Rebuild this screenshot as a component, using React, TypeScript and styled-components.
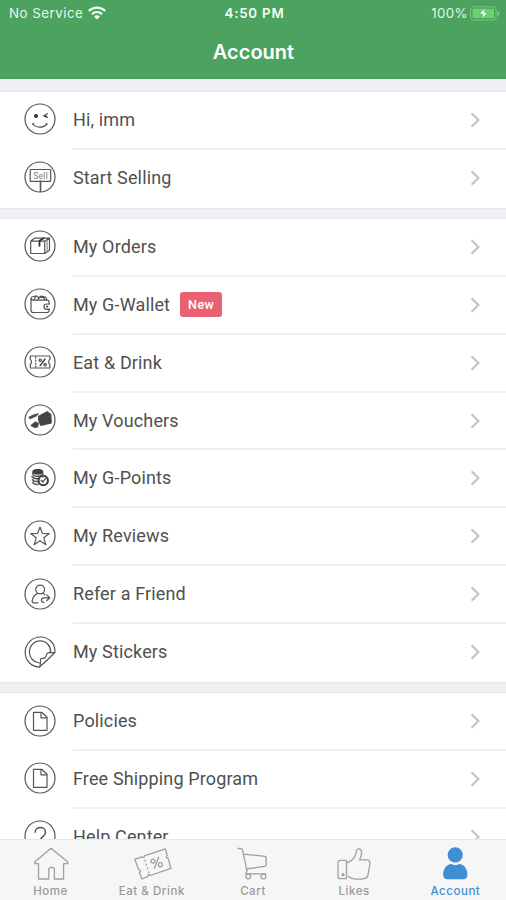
import React from 'react';
import styled, { createGlobalStyle } from 'styled-components';

const GlobalStyle = createGlobalStyle`
  * { box-sizing: border-box; }
  body { margin: 0; background: #fff; }
`;

const Screen = styled.div`
  width: 506px;
  height: 900px;
  display: flex;
  flex-direction: column;
  overflow: hidden;
  background: #efeff4;
  font-family: Roboto, sans-serif;
`;

const Header = styled.header`
  flex: none;
  height: 79px;
  background: #4ba35f;
  border-bottom: 1px solid #459757;
  color: #fff;
  font-family: Inter, sans-serif;
`;

const StatusBar = styled.div`
  display: grid;
  grid-template-columns: 1fr auto 1fr;
  align-items: center;
  height: 26px;
  padding: 0 6px 0 9px;
  font-size: 13.3px;
  line-height: 16px;
`;

const Carrier = styled.div`
  display: flex;
  align-items: center;
  gap: 5px;
  color: #e9f6e9;
  letter-spacing: 0.5px;
`;

const Clock = styled.div`
  font-weight: 600;
  letter-spacing: 0.8px;
  color: #f4fff4;
`;

const Battery = styled.div`
  display: flex;
  align-items: center;
  justify-content: flex-end;
  gap: 2px;
  color: #e2f5e2;
  letter-spacing: 0.35px;
`;

const Title = styled.h1`
  margin: 11px 0 0;
  padding-left: 1px;
  text-align: center;
  font-size: 20px;
  line-height: 30px;
  font-weight: 600;
  letter-spacing: 0;
`;

const List = styled.main`
  flex: 1;
  min-height: 0;
  overflow: hidden;
  padding-top: 12px;
  display: flex;
  flex-direction: column;
  gap: 9.2px;
`;

const Section = styled.section`
  flex: none;
  background: #fff;
  border-top: 1px solid #e6e6ea;
  border-bottom: 1px solid #e6e6ea;
`;

const Row = styled.div`
  display: flex;
  align-items: center;
  height: 57.88px;
  padding-left: 24px;
`;

const RowBody = styled.div<{ $last: boolean }>`
  flex: 1;
  align-self: stretch;
  display: flex;
  align-items: center;
  margin-left: 17px;
  padding-right: 25px;
  border-bottom: 2px solid ${(p) => (p.$last ? 'transparent' : '#efeff1')};
`;

const Label = styled.span`
  color: #505050;
  font-size: 18px;
  line-height: 24px;
  letter-spacing: 0.14px;
  white-space: nowrap;
`;

const Badge = styled.span`
  margin-left: 10px;
  width: 42px;
  height: 25px;
  border-radius: 3px;
  background: #ea6271;
  color: #fff;
  font-size: 12.5px;
  font-weight: 500;
  letter-spacing: 0.4px;
  line-height: 25px;
  text-align: center;
`;

const Glyph = styled.svg`
  flex: none;
  width: 32px;
  height: 32px;
  margin-bottom: 3px;
  fill: none;
  stroke: #555;
  stroke-width: 1.2;
  stroke-linecap: round;
  stroke-linejoin: round;
`;

const Chevron = styled.svg`
  margin-left: auto;
  width: 11px;
  height: 18px;
  fill: none;
  stroke: #c3c3c6;
  stroke-width: 2.2;
`;

const TabBar = styled.nav`
  flex: none;
  height: 61px;
  display: grid;
  grid-template-columns: repeat(5, 1fr);
  background: #f6f6f6;
  border-top: 1px solid #e9e9ea;
`;

const Tab = styled.div<{ $active: boolean }>`
  display: flex;
  flex-direction: column;
  align-items: center;
  padding-top: 5px;
  color: ${(p) => (p.$active ? '#3f8fd2' : '#999')};
  font-family: Inter, sans-serif;
  font-size: 11.5px;
  font-weight: 500;
  line-height: 14px;
  letter-spacing: 0.55px;
`;

const TabIcon = styled.svg`
  width: 40px;
  height: 36px;
  margin-bottom: 3px;
  fill: none;
  stroke: #a0a0a0;
  stroke-width: 1.3;
  stroke-linejoin: round;
  stroke-linecap: round;
`;

const ring = <circle cx="16" cy="16" r="15" />;

const doc = (
  <>
    {ring}
    <path d="M9.5 7.3h8.2l5.3 5v13H9.5z" />
    <path d="M17 7.5v5.3h5.8" />
  </>
);

const glyphs: Record<string, React.ReactNode> = {
  smile: (
    <>
      {ring}
      <circle cx="12" cy="13" r="1.4" fill="#333" stroke="#333" />
      <path d="M23.5 10.6 19.6 13l3.9 1.6M19.8 13h3" stroke="#444" strokeWidth="1.1" />
      <path d="M9 21c3.3 4.2 10.4 4.2 13.8 0M8.6 21.3l.9-.8M22.3 20.4l.9.9" />
    </>
  ),
  sell: (
    <>
      {ring}
      <rect x="6.2" y="8.5" width="20.5" height="11.8" rx="0.5" />
      <path d="M16.5 20.3v10" strokeWidth="1.6" />
      <text x="16.6" y="18" textAnchor="middle" fontSize="8.5" letterSpacing="0.3" fill="#777" stroke="none">Sell</text>
    </>
  ),
  box: (
    <>
      {ring}
      <path d="M6.7 11.2h14v12.3h-14zM6.7 11.2l4.1-3.1h14.7l-4.8 3.1M20.7 23.5l4.8-3.2V8.1" />
      <path d="m15.6 10.7 4.2-2.6M15.5 10.8v5" stroke="#333" strokeWidth="1.8" />
      <path d="M23.1 10.3v10.8" strokeWidth="0.8" />
    </>
  ),
  wallet: (
    <>
      {ring}
      <path d="M7 11.2v11c0 1.5.8 2.3 2.2 2.3h14c1.2 0 1.9-.7 1.9-1.9v-1.5M7 11.2c.5.7 1.2 1 2.2 1h14c1.2 0 1.9.7 1.9 1.8v1.8" />
      <path d="M25.5 16h-2.8a2.7 2.7 0 0 0 0 5.4h2.8" />
      <path d="M7 11.2c0-1.6.8-2.7 2.2-2.7l3.4-.7 1.8 1.8L17.5 8l4.5 1.3.8 2.8M9.6 11.8l2-3M13.5 11.8l2.3-2.5h3.4l1.6 2.3" strokeWidth="1.2" />
      <circle cx="23.2" cy="18.7" r="0.5" />
    </>
  ),
  ticket: (
    <>
      {ring}
      <path d="M6.3 10h19.6v3.5c-1.6.4-1.6 4.4 0 4.8V22H6.3v-3.7c1.6-.4 1.6-4.4 0-4.8z" />
      <path d="M11.7 11v1.2M11.7 14v1.2M11.7 17v1.2M11.7 20v1.2" />
      <path d="m16 19.8 5-6.8" stroke="#333" strokeWidth="1.3" />
      <circle cx="16.2" cy="14.2" r="1.2" stroke="#444" />
      <circle cx="21.1" cy="18.8" r="1.2" stroke="#444" />
    </>
  ),
  voucher: (
    <>
      {ring}
      <path d="m14.8 12.3 8.3-4.5 3.7 2.6.4 8.5-10.4 2.4-2.2-5.3z" fill="#444" stroke="#444" />
      <path d="m5 13.2 5-2.3 4.3-1-1.8 1.7-6.4 3.1z" fill="#444" />
      <path d="m7.1 21.4 4.3-3.3 3 1.1-.8 3.8-3.3.3z" fill="#444" />
    </>
  ),
  coins: (
    <>
      {ring}
      <ellipse cx="13.8" cy="9.7" rx="4.8" ry="2.2" fill="#444" stroke="#333" />
      <path d="M8.9 10.2v2c1 2.7 8.6 2.7 9.8 0v-2M8 14.5c1.2 2 4.4 2.6 7 2M8.5 17.7c1.1 1.5 3.2 2.1 5.4 1.8M8.5 20.4c1.1 1.6 3.4 2.3 5.6 2" strokeWidth="1.5" />
      <circle cx="19.2" cy="18.5" r="4.7" strokeWidth="2.1" stroke="#3d3d3d" />
      <path d="m17.2 18.3 1.6 1.8 2.6-3.5M19 13.8v1.3" strokeWidth="1.5" />
    </>
  ),
  star: (
    <>
      {ring}
      <path d="m16 7 2.3 6.4 7 .2-5.5 4.2 2 6.9-5.8-4-5.8 4 2-6.9-5.5-4.2 7-.2z" />
    </>
  ),
  refer: (
    <>
      {ring}
      <circle cx="16.2" cy="11.5" r="4.4" />
      <path d="M13.7 15.4c-3.2 1.3-5.3 4-5.6 8.2 0 .9.4 1.2 1.2 1.2h4.6M18.7 15.3l2.1 1.4M20.2 24.5c-3.8-.4-3.5-4.7-.2-4.7h5.3M22.7 16.9l3 2.9-3 2.9" />
    </>
  ),
  sticker: (
    <>
      <path d="M30.8 16.5C31.7 7.8 25.2 1 16.5 1 8.3 1 1.2 7.6 1.2 16c0 8.6 6.2 15 14.3 15 4.5-3.8 11.4-10.4 15.3-14.5z" />
      <path d="M26.6 16.2c.3-6.1-4.1-11.3-10.3-11.3S5.4 9.8 5.4 16c0 5.7 4 10 9.8 11M15.5 31c1.7-3.1.5-6.1 1.2-8.3 1.7-.7 3.2.3 4.6-1.3 1.3-1.4.7-3.8 2.8-4.7 2-.4 4.6.2 6.7-.2" />
    </>
  ),
  doc,
  help: (
    <>
      {ring}
      <path d="M11.2 12.3c0-6.4 10.3-6.3 10.3 0 0 4.5-5.2 4.1-5.2 8.4" strokeWidth="1.5" />
      <circle cx="16.3" cy="24" r="0.5" />
    </>
  ),
};

const tabGlyphs: Record<string, React.ReactNode> = {
  home: <path d="M20 3.3 3.7 17.1v1.6h3.8V34h10.3V24.6c0-3 5.6-3 5.6 0V34h9.2V18.7h4.2v-1.6l-5.1-4.4z" />,
  ticket: (
    <>
      <path d="M2.8 14.3 10 11.8c.8 1.4 2.7.7 2.4-.9l20.9-7.1 2 6.6c-1.6.7-1 2.9.8 2.7l2.8 10.2-20.6 7.2c-.6-1.5-2.7-.8-2.3.8L10 34l-2.6-6.6c1.6-.7 1.1-2.9-.7-2.7z" />
      <path d="M13 15.1l.3.8M14.2 19.1l.3.8M15.4 23l.3.8M16.6 27l.2.6" />
      <path d="m22.5 23.2 4.2-11.1" />
      <circle cx="21" cy="16.1" r="2" />
      <circle cx="28.4" cy="19.7" r="2" />
    </>
  ),
  cart: (
    <>
      <path d="M5.3 3.5h2c1.3 0 2 .5 2.3 1.8l4.4 20.4c.2 1.6-2.3 2.5-.5 3.2h19.4M10.7 9.1l21.4 2.2c.8.1 1 .5 1 1.1v7.4c0 .9-.4 1.4-1.2 1.5L13.3 24" />
      <circle cx="15.3" cy="31.5" r="2.4" />
      <circle cx="30.4" cy="31.5" r="2.4" />
    </>
  ),
  like: (
    <>
      <path d="M12.5 15.3H6.2c-1.2 0-2.2 1-2.2 2.1v14.4c0 1.2.9 1.9 2.1 1.9h6.4zM12.5 18.1c6.7-2.5 8.6-5.7 9.3-9.2.5-2.5.4-5.1 3-5.1 3.4 0 3.8 5.6.7 11h6.8c2.8 0 4.2 1.6 3.6 4.2l-2 11.4c-.5 2.3-1.8 3.2-4 3.3-5.2 1-12.4.6-15.4-2.2" />
      <circle cx="9" cy="29.6" r="1" />
    </>
  ),
  account: (
    <g fill="#3f8fd2" stroke="none">
      <circle cx="20.2" cy="9.8" r="7.6" />
      <path d="M8.2 30.3c-.4-6.4 3.5-10.8 8.1-11.2 2.3 1.4 5.6 1.4 7.9 0 4.6.4 8.5 4.8 8.2 11.2-.3 2.6-1.7 3.9-4.1 3.9h-16c-2.4 0-3.8-1.3-4.1-3.9z" />
    </g>
  ),
};

type Item = { icon: string; label: string; badge?: string };

const sections: Item[][] = [
  [
    { icon: 'smile', label: 'Hi, imm' },
    { icon: 'sell', label: 'Start Selling' },
  ],
  [
    { icon: 'box', label: 'My Orders' },
    { icon: 'wallet', label: 'My G-Wallet', badge: 'New' },
    { icon: 'ticket', label: 'Eat & Drink' },
    { icon: 'voucher', label: 'My Vouchers' },
    { icon: 'coins', label: 'My G-Points' },
    { icon: 'star', label: 'My Reviews' },
    { icon: 'refer', label: 'Refer a Friend' },
    { icon: 'sticker', label: 'My Stickers' },
  ],
  [
    { icon: 'doc', label: 'Policies' },
    { icon: 'doc', label: 'Free Shipping Program' },
    { icon: 'help', label: 'Help Center' },
  ],
];

const tabs = [
  { icon: 'home', label: 'Home' },
  { icon: 'ticket', label: 'Eat & Drink' },
  { icon: 'cart', label: 'Cart' },
  { icon: 'like', label: 'Likes' },
  { icon: 'account', label: 'Account' },
];

export default function App() {
  return (
    <Screen>
      <GlobalStyle />
      <Header>
        <StatusBar>
          <Carrier>
            No Service
            <svg width="18" height="14" viewBox="0 0 18 14" fill="none" stroke="#f2fff2" strokeWidth="2.3">
              <path d="M.8 4.8c4.8-4.3 11.6-4.3 16.4 0M3.9 8.1c3-2.7 7.2-2.7 10.2 0" />
              <path d="M6 10.4c1.8-1.5 4.2-1.5 6 0l-3 3z" fill="#f2fff2" stroke="none" />
            </svg>
          </Carrier>
          <Clock>4:50 PM</Clock>
          <Battery>
            100%
            <svg width="30" height="15" viewBox="0 0 30 15" fill="none">
              <rect x="0.6" y="0.8" width="25.5" height="13.2" rx="3" stroke="#7cc283" />
              <rect x="2.6" y="2.8" width="21.5" height="9.2" rx="1.3" fill="#66d66a" />
              <path d="M27.5 5v5c2.4-1 2.4-4 0-5z" fill="#8ccb91" />
              <path d="m15.4 1.6-6 6.5h3.4l-1.2 5 6.1-6.6h-3.5z" fill="#fff" stroke="#4ba35f" strokeWidth="0.6" />
            </svg>
          </Battery>
        </StatusBar>
        <Title>Account</Title>
      </Header>
      <List>
        {sections.map((items, s) => (
          <Section key={s}>
            {items.map((item, i) => (
              <Row key={item.label}>
                <Glyph viewBox="0 0 32 32">{glyphs[item.icon]}</Glyph>
                <RowBody $last={i === items.length - 1}>
                  <Label>{item.label}</Label>
                  {item.badge && <Badge>{item.badge}</Badge>}
                  <Chevron viewBox="0 0 11 18">
                    <path d="m1.6 2.2 6.8 6.8-6.8 6.8" />
                  </Chevron>
                </RowBody>
              </Row>
            ))}
          </Section>
        ))}
      </List>
      <TabBar>
        {tabs.map((tab) => (
          <Tab key={tab.label} $active={tab.icon === 'account'}>
            <TabIcon viewBox="0 0 40 36">{tabGlyphs[tab.icon]}</TabIcon>
            {tab.label}
          </Tab>
        ))}
      </TabBar>
    </Screen>
  );
}
